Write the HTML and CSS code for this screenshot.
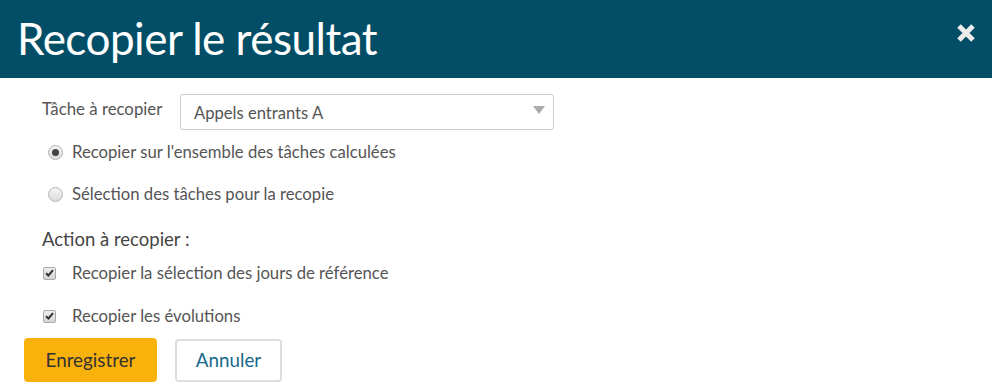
FILE: index.html
```
<!DOCTYPE html>
<html lang="fr">
<head>
<meta charset="utf-8">
<link rel="stylesheet" href="styles.css">
</head>
<body>
<div class="modal">
  <header class="modal-header">
    <h1 class="title">Recopier le résultat</h1>
    <span class="close" aria-label="Fermer">
      <svg width="20" height="20" viewBox="0 0 20 20"><path d="M3 3 L17 17 M17 3 L3 17" stroke="#ececec" stroke-width="5" stroke-linecap="butt"/></svg>
    </span>
  </header>
  <div class="modal-body">
    <div class="task-row">
      <label class="task-label">Tâche à recopier</label>
      <div class="select">
        <span>Appels entrants A</span>
        <span class="caret"></span>
      </div>
    </div>
    <div class="option radio-row first">
      <span class="radio checked"></span>
      <span>Recopier sur l'ensemble des tâches calculées</span>
    </div>
    <div class="option radio-row">
      <span class="radio"></span>
      <span>Sélection des tâches pour la recopie</span>
    </div>
    <div class="section-title">Action à recopier :</div>
    <div class="option check-row first">
      <span class="check"><svg width="9" height="8" viewBox="0 0 9 8"><path d="M1 4.2 L3.4 6.5 L8 1.2" fill="none" stroke="#333" stroke-width="2"/></svg></span>
      <span>Recopier la sélection des jours de référence</span>
    </div>
    <div class="option check-row">
      <span class="check"><svg width="9" height="8" viewBox="0 0 9 8"><path d="M1 4.2 L3.4 6.5 L8 1.2" fill="none" stroke="#333" stroke-width="2"/></svg></span>
      <span>Recopier les évolutions</span>
    </div>
  </div>
  <div class="actions">
    <button class="btn btn-primary">Enregistrer</button>
    <button class="btn btn-default">Annuler</button>
  </div>
</div>
</body>
</html>
```
FILE: styles.css
```
* { box-sizing: border-box; }
html, body { margin: 0; padding: 0; background: #fff; }
body {
  font-family: Lato, "Open Sans", sans-serif;
  color: #555;
  width: 992px;
  height: 389px;
  overflow: hidden;
}
.modal-header {
  height: 78px;
  background: #034e67;
  display: flex;
  align-items: center;
  justify-content: space-between;
  padding: 0 16px 0 17px;
}
.title {
  margin: 0;
  color: #fff;
  font-weight: 400;
  font-size: 44px;
  letter-spacing: -0.5px;
  line-height: 1;
  position: relative;
  top: -1px;
}
.close {
  display: flex;
  margin-top: -12px;
}
.modal-body {
  padding: 16px 0 0 42px;
}
.task-row {
  display: flex;
  align-items: flex-start;
}
.task-label {
  font-size: 16.8px;
  width: 138px;
  padding-top: 4px;
}
.select {
  width: 374px;
  height: 36px;
  border: 1px solid #ccc;
  border-radius: 3px;
  display: flex;
  align-items: center;
  justify-content: space-between;
  padding: 2px 8px 0 13px;
  font-size: 16.6px;
  color: #555;
}
.caret {
  width: 0; height: 0;
  border-left: 6px solid transparent;
  border-right: 6px solid transparent;
  border-top: 8px solid #aaa;
  margin-top: -6px;
}
.option {
  display: flex;
  align-items: center;
  font-size: 16.7px;
  height: 20px;
}
.radio-row { padding-left: 6px; margin-top: 22px; }
.radio-row.first { margin-top: 12px; }
.radio {
  width: 15px; height: 15px;
  border-radius: 50%;
  border: 1px solid #b5b5b5;
  background: linear-gradient(#f4f4f4, #dcdcdc);
  margin-right: 9px;
  display: flex;
  align-items: center;
  justify-content: center;
}
.radio.checked::after {
  content: "";
  width: 7px; height: 7px;
  border-radius: 50%;
  background: #444;
}
.section-title {
  font-size: 18.5px;
  color: #444;
  margin-top: 24px;
}
.check-row { margin-top: 23px; }
.check-row.first { margin-top: 13px; }
.check {
  width: 13px; height: 13px;
  border-radius: 2px;
  border: 1px solid #aaa;
  background: linear-gradient(#eee, #d4d4d4);
  margin: 0 16px 0 1px;
  display: flex;
  align-items: center;
  justify-content: center;
}
.actions {
  display: flex;
  gap: 18px;
  padding: 0 0 0 24px;
  margin-top: 12px;
}
.btn {
  font-family: inherit;
  font-size: 18.8px;
  height: 44px;
  border-radius: 4px;
  cursor: pointer;
  padding: 0 0 2px;
}
.btn-primary {
  width: 133px;
  background: #f9b10b;
  border: none;
  color: #333;
}
.btn-default {
  width: 107px;
  background: #fff;
  border: 2px solid #ddd;
  color: #16698a;
  margin-top: 1px;
  height: 43px;
}
```
